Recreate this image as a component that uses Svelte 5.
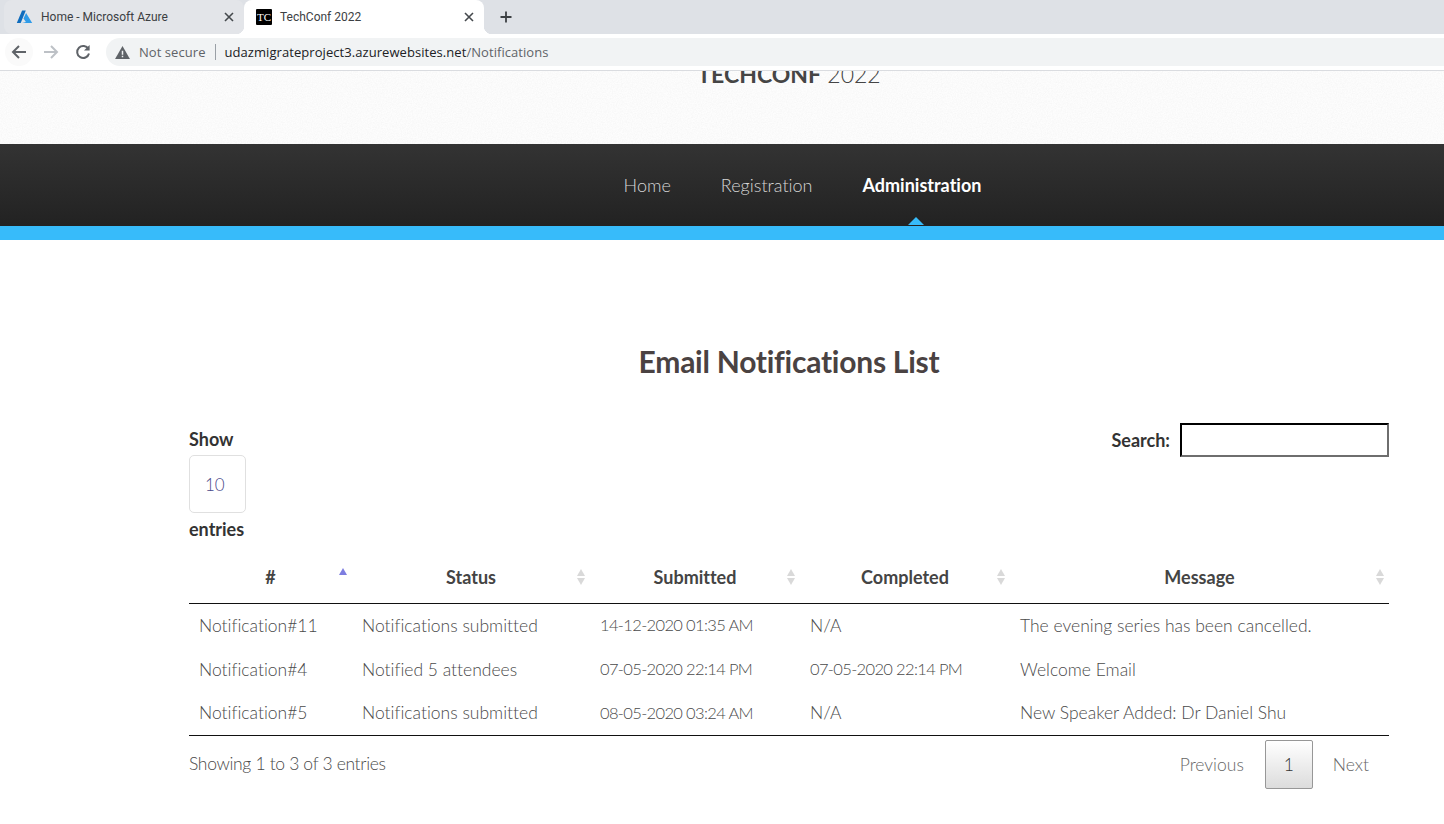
<script lang="ts">
	const rows = [
		['Notification#11', 'Notifications submitted', '14-12-2020 01:35 AM', 'N/A', 'The evening series has been cancelled.'],
		['Notification#4', 'Notified 5 attendees', '07-05-2020 22:14 PM', '07-05-2020 22:14 PM', 'Welcome Email'],
		['Notification#5', 'Notifications submitted', '08-05-2020 03:24 AM', 'N/A', 'New Speaker Added: Dr Daniel Shu']
	];
	const columns = [
		{ name: '#', width: 163, sorted: true },
		{ name: 'Status', width: 238 },
		{ name: 'Submitted', width: 210 },
		{ name: 'Completed', width: 210 },
		{ name: 'Message', width: 379 }
	];
</script>

<div class="window">
	<div class="tabstrip">
		<div class="tab">
			<svg class="favicon" viewBox="0 0 16 16" aria-hidden="true">
				<path d="M5.6 1.5 H9.3 L4.2 14 H0.3 Z" fill="#0f6cbd" />
				<path d="M9.6 4 L15.7 14 H5.6 L9.4 13 L7 9.6 Z" fill="#2f9be8" />
			</svg>
			<span class="tab-title">Home - Microsoft Azure</span>
			<svg class="close" viewBox="0 0 10 10" aria-hidden="true">
				<path d="M1 1 L9 9 M9 1 L1 9" stroke="#45494d" stroke-width="1.6" />
			</svg>
		</div>
		<div class="tab active">
			<span class="tc">TC</span>
			<span class="tab-title">TechConf 2022</span>
			<svg class="close" viewBox="0 0 10 10" aria-hidden="true">
				<path d="M1 1 L9 9 M9 1 L1 9" stroke="#45494d" stroke-width="1.6" />
			</svg>
		</div>
		<svg class="newtab" viewBox="0 0 12 12" aria-hidden="true">
			<path d="M6 0.5 V11.5 M0.5 6 H11.5" stroke="#3c4043" stroke-width="1.8" />
		</svg>
	</div>
	<div class="toolbar">
		<span class="navbtn hover">
			<svg class="nav" viewBox="0 0 16 16" aria-hidden="true">
				<path d="M15 8 H2 M8 2 L2 8 L8 14" fill="none" stroke="#5f6368" stroke-width="2" />
			</svg>
		</span>
		<span class="navbtn">
			<svg class="nav" viewBox="0 0 16 16" aria-hidden="true">
				<path d="M1 8 H14 M8 2 L14 8 L8 14" fill="none" stroke="#bdc1c6" stroke-width="2" />
			</svg>
		</span>
		<span class="navbtn">
			<svg class="nav" viewBox="0 0 16 16" aria-hidden="true">
				<path d="M13.4 5 A6 6 0 1 0 14 9.5" fill="none" stroke="#5f6368" stroke-width="2" />
				<path d="M14.6 1 V6.6 H9 Z" fill="#5f6368" />
			</svg>
		</span>
		<div class="omnibox">
			<svg class="warn" viewBox="0 0 16 14" aria-hidden="true">
				<path d="M8 0 L16 14 H0 Z" fill="#5f6368" />
				<path d="M7.2 5 H8.8 V9.5 H7.2 Z M7.2 10.6 H8.8 V12.2 H7.2 Z" fill="#f1f3f4" />
			</svg>
			<span class="insecure">Not secure</span>
			<span class="sep"></span>
			<span class="url">udazmigrateproject3.azurewebsites.net<span class="path">/Notifications</span></span>
		</div>
	</div>

	<div class="page">
		<header class="masthead">
			<svg class="grain" width="100%" height="100%" aria-hidden="true">
				<filter id="grain">
					<feTurbulence type="fractalNoise" baseFrequency="0.8" numOctaves="2" />
					<feColorMatrix values="0 0 0 0 0.5  0 0 0 0 0.5  0 0 0 0 0.5  0.5 0 0 0 -0.15" />
				</filter>
				<rect width="100%" height="100%" filter="url(#grain)" opacity="0.35" />
			</svg>
			<div class="brand"><strong>TECHCONF</strong> 2022</div>
		</header>
		<nav class="mainnav">
			<a href="#home">Home</a>
			<a href="#registration">Registration</a>
			<a href="#administration" class="current">Administration</a>
		</nav>
		<main class="content">
			<h1>Email Notifications List</h1>
			<div class="controls">
				<div class="length">
					<span>Show</span>
					<span class="select">10</span>
					<span>entries</span>
				</div>
				<label class="search">Search: <input type="text" /></label>
			</div>
			<table>
				<thead>
					<tr>
						{#each columns as col}
							<th style="width: {col.width}px">
								{col.name}
								{#if col.sorted}
									<span class="sort asc"></span>
								{:else}
									<span class="sort"></span>
								{/if}
							</th>
						{/each}
					</tr>
				</thead>
				<tbody>
					{#each rows as row}
						<tr>
							{#each row as cell}
								<td class:date={/^\d/.test(cell)}>{cell}</td>
							{/each}
						</tr>
					{/each}
				</tbody>
			</table>
			<div class="tablefoot">
				<span class="info">Showing 1 to 3 of 3 entries</span>
				<div class="pager">
					<span class="pg">Previous</span>
					<span class="pg on">1</span>
					<span class="pg">Next</span>
				</div>
			</div>
		</main>
	</div>
</div>

<style>
	:global(body) {
		margin: 0;
		background: #fff;
	}

	.window {
		width: 1444px;
		height: 824px;
		overflow: hidden;
		display: flex;
		flex-direction: column;
		font-family: 'Lato', sans-serif;
		font-variant-ligatures: none;
	}

	.tabstrip {
		height: 34px;
		background: #dee1e6;
		display: flex;
		align-items: center;
		padding-left: 4px;
		flex: none;
	}

	.tab {
		width: 240px;
		height: 34px;
		display: flex;
		align-items: center;
		box-sizing: border-box;
		padding: 0 10px 0 12px;
		gap: 8px;
		font-size: 12px;
		color: #3c4043;
		background: #e3e5e9;
		border-radius: 8px 8px 8px 8px;
	}

	.tab.active {
		background: #fff;
		border-radius: 8px 8px 0 0;
		position: relative;
	}

	.tab.active::before,
	.tab.active::after {
		content: '';
		position: absolute;
		bottom: 0;
		width: 8px;
		height: 8px;
	}

	.tab.active::before {
		left: -8px;
		background: radial-gradient(circle at 0 0, #e3e5e9 8px, #fff 8.5px);
	}

	.tab.active::after {
		right: -8px;
		background: radial-gradient(circle at 100% 0, #dee1e6 8px, #fff 8.5px);
	}

	.favicon {
		width: 17px;
		height: 16px;
	}

	.tc {
		width: 16px;
		height: 16px;
		background: #000;
		color: #fff;
		font: 11px/16px 'Liberation Serif', serif;
		text-align: center;
		border-radius: 1px;
	}

	.tab-title {
		flex: 1;
		font-family: 'Roboto', sans-serif;
	}

	.close {
		width: 10px;
		height: 10px;
	}

	.newtab {
		width: 12px;
		height: 12px;
		margin-left: 16px;
	}

	.toolbar {
		height: 37px;
		background: #fff;
		border-bottom: 1px solid #dadce0;
		box-sizing: border-box;
		display: flex;
		align-items: center;
		padding: 0 0 0 5px;
		gap: 4px;
		flex: none;
	}

	.navbtn {
		width: 28px;
		height: 28px;
		border-radius: 50%;
		display: flex;
		align-items: center;
		justify-content: center;
	}

	.navbtn.hover {
		background: #fafafa;
	}

	.nav {
		width: 16px;
		height: 16px;
	}

	.omnibox {
		flex: 1;
		height: 28px;
		margin-left: 5px;
		background: #f1f3f4;
		border-radius: 14px 0 0 14px;
		display: flex;
		align-items: center;
		padding-left: 9px;
		font: 13px 'Open Sans', sans-serif;
		letter-spacing: 0.06px;
		color: #5f6368;
	}

	.warn {
		width: 15px;
		height: 13px;
		margin-right: 9px;
	}

	.sep {
		width: 1px;
		height: 16px;
		background: #9aa0a6;
		margin: 0 9px;
	}

	.url {
		color: #202124;
	}

	.path {
		color: #5f6368;
	}

	.page {
		flex: 1;
		overflow: hidden;
		font-weight: 300;
		color: #4a4a4a;
		font-size: 16px;
	}

	.masthead {
		height: 73px;
		overflow: hidden;
		background: #fdfdfd;
		text-align: center;
		position: relative;
	}

	.grain {
		position: absolute;
		inset: 0;
	}

	.brand {
		position: relative;
		margin-top: -12px;
		font-size: 23px;
		line-height: 30px;
		color: #454545;
		padding-left: 134px;
	}

	.brand strong {
		font-weight: 700;
	}

	.mainnav {
		height: 82px;
		background: linear-gradient(#333, #222);
		border-bottom: 14px solid #37bbfa;
		display: flex;
		justify-content: center;
		align-items: center;
		gap: 50px;
		padding-left: 161px;
		font-size: 18px;
	}

	.mainnav a {
		color: #d6d6d6;
		text-decoration: none;
	}

	.mainnav a.current {
		color: #fff;
		font-weight: 700;
		position: relative;
	}

	.mainnav a.current::after {
		content: '';
		position: absolute;
		left: 50%;
		margin-left: -14px;
		bottom: -29px;
		border: 8px solid transparent;
		border-top: 0;
		border-bottom-color: #37bbfa;
	}

	.content {
		width: 1200px;
		margin-left: 189px;
	}

	h1 {
		margin: 103px 0 44px;
		text-align: center;
		font-size: 30px;
		letter-spacing: -0.25px;
		line-height: 36px;
		font-weight: 700;
		color: #4a4242;
	}

	.controls {
		display: flex;
		justify-content: space-between;
		align-items: flex-start;
		font-weight: 700;
		color: #333;
		font-size: 18px;
	}

	.length {
		display: flex;
		flex-direction: column;
		align-items: flex-start;
	}

	.length > span {
		line-height: 32px;
	}

	.length .select {
		width: 57px;
		height: 58px;
		box-sizing: border-box;
		border: 1px solid #e0e0e0;
		border-radius: 5px;
		line-height: 58px;
		padding-left: 15px;
		font-size: 17px;
		font-weight: 300;
		color: #4a4a8a;
	}

	.search {
		display: flex;
		align-items: center;
		gap: 10px;
	}

	.search input {
		width: 209px;
		height: 34px;
		box-sizing: border-box;
		border-width: 2px;
		border-style: inset;
		border-color: #222 #6e6e6e #6e6e6e #222;
		padding: 0;
	}

	table {
		width: 1200px;
		table-layout: fixed;
		border-collapse: collapse;
		margin-top: 7px;
		border-bottom: 1px solid #111;
	}

	th {
		position: relative;
		height: 51px;
		padding: 0;
		box-sizing: border-box;
		border-bottom: 1px solid #111;
		font-weight: 700;
		font-size: 18px;
		color: #444;
		text-align: center;
	}

	td {
		height: 44px;
		padding: 0 10px;
		font-size: 17.5px;
		box-sizing: border-box;
		white-space: nowrap;
	}

	td.date {
		font-size: 16.5px;
		letter-spacing: -0.65px;
	}

	.sort {
		position: absolute;
		right: 5px;
		top: 17px;
		width: 8px;
		height: 16px;
	}

	.sort::before,
	.sort::after {
		content: '';
		position: absolute;
		left: 0;
		border-left: 4px solid transparent;
		border-right: 4px solid transparent;
	}

	.sort::before {
		top: 0;
		border-bottom: 7px solid #d9d9d9;
	}

	.sort::after {
		bottom: 0;
		border-top: 7px solid #d9d9d9;
	}

	.sort.asc {
		top: 16px;
	}

	.sort.asc::before {
		border-bottom-color: #7d7de0;
	}

	.sort.asc::after {
		display: none;
	}

	.tablefoot {
		display: flex;
		justify-content: space-between;
		align-items: flex-start;
		padding-top: 4px;
	}

	.info {
		font-size: 17.5px;
		letter-spacing: -0.33px;
		line-height: 47px;
	}

	.pager {
		display: flex;
		font-size: 17.5px;
		color: #666;
	}

	.pg {
		height: 49px;
		line-height: 49px;
		padding: 0 20px;
		box-sizing: border-box;
	}

	.pg.on {
		width: 48px;
		padding: 0;
		text-align: center;
		line-height: 47px;
		border: 1px solid #979797;
		border-radius: 2px;
		background: linear-gradient(#fff, #dcdcdc);
		color: #333;
		margin-left: 1px;
	}
</style>
